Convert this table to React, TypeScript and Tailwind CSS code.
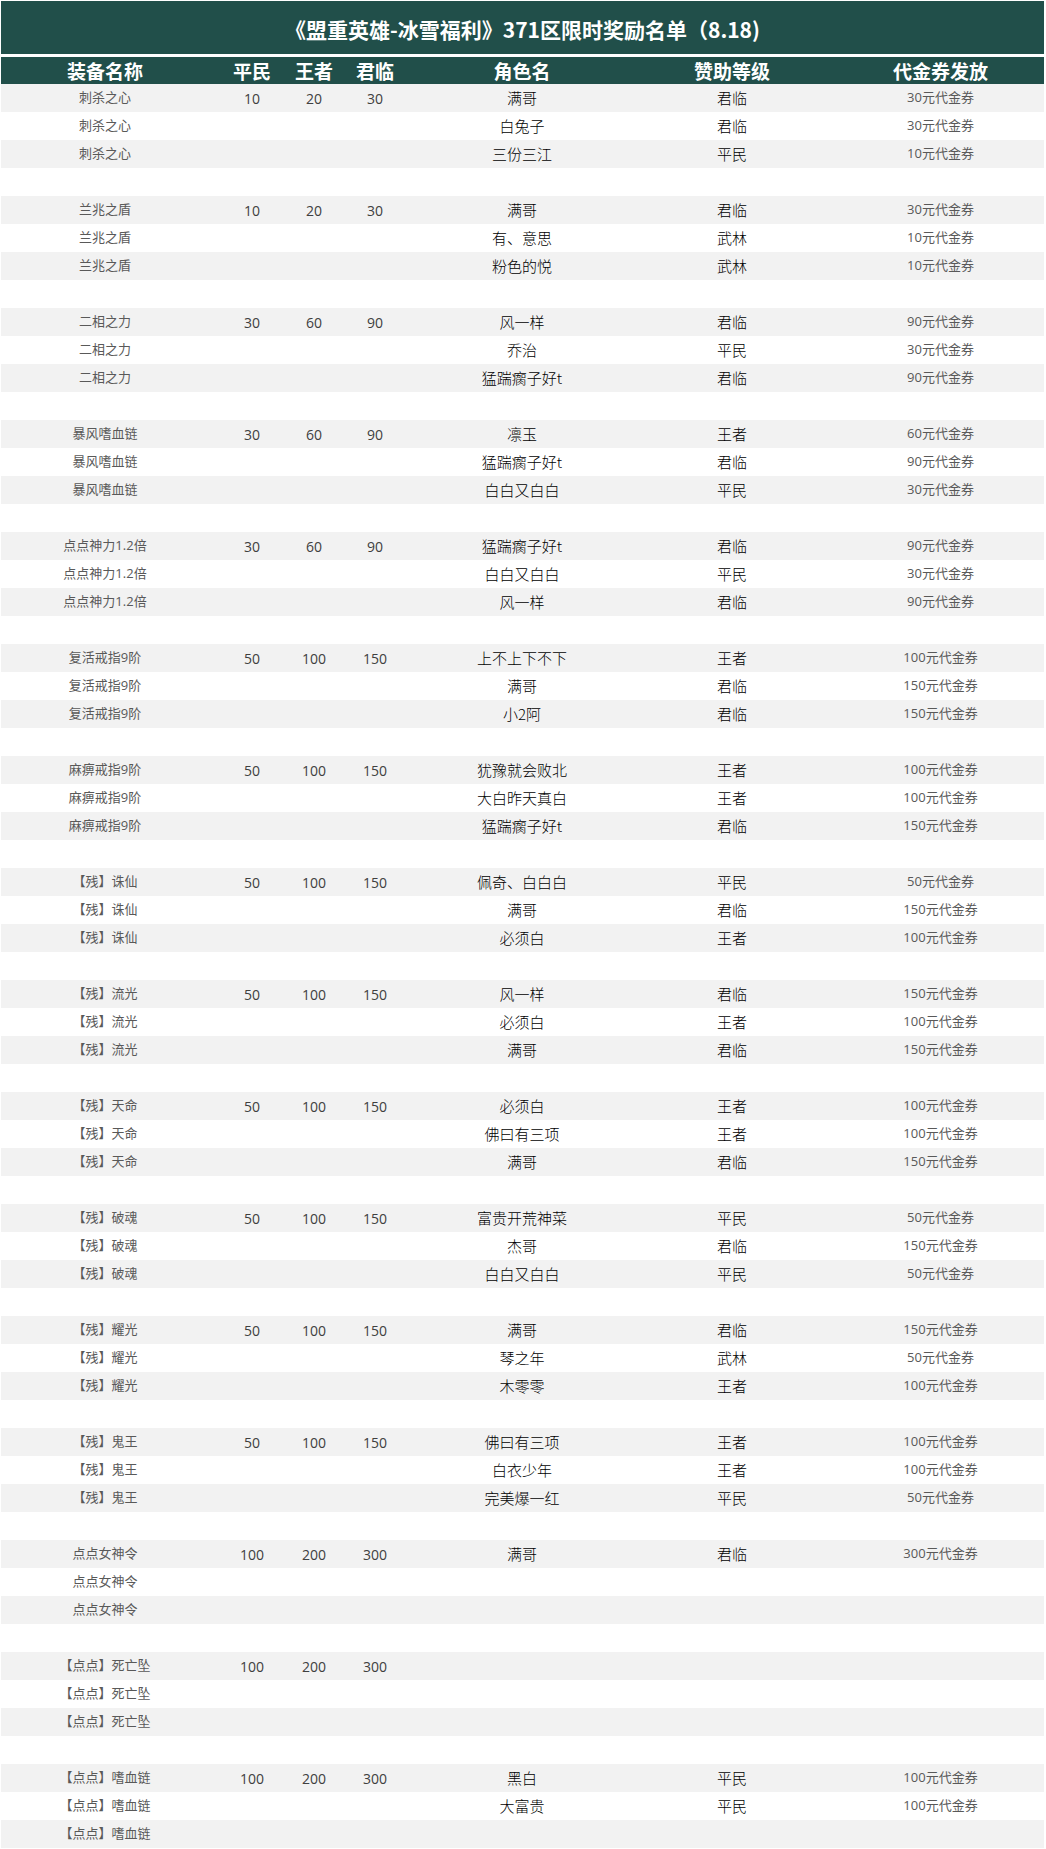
import React from 'react'

interface Row {
  item: string
  a?: string
  b?: string
  c?: string
  role?: string
  level?: string
  coupon?: string
}

type Group = {
  item: string
  price: [string, string, string]
  winners: ([string, string, string] | null)[]
}

const groups: Group[] = [
  { item: '刺杀之心', price: ['10', '20', '30'], winners: [['满哥', '君临', '30元代金券'], ['白兔子', '君临', '30元代金券'], ['三份三江', '平民', '10元代金券']] },
  { item: '兰兆之盾', price: ['10', '20', '30'], winners: [['满哥', '君临', '30元代金券'], ['有、意思', '武林', '10元代金券'], ['粉色的悦', '武林', '10元代金券']] },
  { item: '二相之力', price: ['30', '60', '90'], winners: [['风一样', '君临', '90元代金券'], ['乔治', '平民', '30元代金券'], ['猛踹瘸子好t', '君临', '90元代金券']] },
  { item: '暴风嗜血链', price: ['30', '60', '90'], winners: [['凛玉', '王者', '60元代金券'], ['猛踹瘸子好t', '君临', '90元代金券'], ['白白又白白', '平民', '30元代金券']] },
  { item: '点点神力1.2倍', price: ['30', '60', '90'], winners: [['猛踹瘸子好t', '君临', '90元代金券'], ['白白又白白', '平民', '30元代金券'], ['风一样', '君临', '90元代金券']] },
  { item: '复活戒指9阶', price: ['50', '100', '150'], winners: [['上不上下不下', '王者', '100元代金券'], ['满哥', '君临', '150元代金券'], ['小2阿', '君临', '150元代金券']] },
  { item: '麻痹戒指9阶', price: ['50', '100', '150'], winners: [['犹豫就会败北', '王者', '100元代金券'], ['大白昨天真白', '王者', '100元代金券'], ['猛踹瘸子好t', '君临', '150元代金券']] },
  { item: '【残】诛仙', price: ['50', '100', '150'], winners: [['佩奇、白白白', '平民', '50元代金券'], ['满哥', '君临', '150元代金券'], ['必须白', '王者', '100元代金券']] },
  { item: '【残】流光', price: ['50', '100', '150'], winners: [['风一样', '君临', '150元代金券'], ['必须白', '王者', '100元代金券'], ['满哥', '君临', '150元代金券']] },
  { item: '【残】天命', price: ['50', '100', '150'], winners: [['必须白', '王者', '100元代金券'], ['佛曰有三项', '王者', '100元代金券'], ['满哥', '君临', '150元代金券']] },
  { item: '【残】破魂', price: ['50', '100', '150'], winners: [['富贵开荒神菜', '平民', '50元代金券'], ['杰哥', '君临', '150元代金券'], ['白白又白白', '平民', '50元代金券']] },
  { item: '【残】耀光', price: ['50', '100', '150'], winners: [['满哥', '君临', '150元代金券'], ['琴之年', '武林', '50元代金券'], ['木零零', '王者', '100元代金券']] },
  { item: '【残】鬼王', price: ['50', '100', '150'], winners: [['佛曰有三项', '王者', '100元代金券'], ['白衣少年', '王者', '100元代金券'], ['完美爆一红', '平民', '50元代金券']] },
  { item: '点点女神令', price: ['100', '200', '300'], winners: [['满哥', '君临', '300元代金券'], null, null] },
  { item: '【点点】死亡坠', price: ['100', '200', '300'], winners: [null, null, null] },
  { item: '【点点】嗜血链', price: ['100', '200', '300'], winners: [['黑白', '平民', '100元代金券'], ['大富贵', '平民', '100元代金券'], null] },
]

// flatten groups into table rows, one empty row between groups
const rows: (Row | null)[] = []
groups.forEach((g, gi) => {
  g.winners.forEach((w, i) => {
    rows.push({
      item: g.item,
      a: i === 0 ? g.price[0] : '',
      b: i === 0 ? g.price[1] : '',
      c: i === 0 ? g.price[2] : '',
      role: w ? w[0] : '',
      level: w ? w[1] : '',
      coupon: w ? w[2] : '',
    })
  })
  if (gi < groups.length - 1) rows.push(null)
})

const cols = 'grid grid-cols-[208px_86px_38px_84px_210px_210px_207px]'
const cell = 'flex items-center justify-center whitespace-nowrap'

const App = () => {
  return (
    <div className="pl-px pt-px w-[1046px] bg-white font-['Open_Sans','Noto_Sans_CJK_SC',sans-serif]">
      <div className="w-[1043px]">
        <div className="h-[53px] bg-[#214f4a] flex items-center justify-center pt-[5px]">
          <h1 className="text-white text-[21px] font-bold font-['Noto_Sans_CJK_SC',sans-serif]">《盟重英雄-冰雪福利》371区限时奖励名单（8.18)</h1>
        </div>

        <div className={cols + ' h-[27px] mt-[3px] bg-[#214f4a] text-white text-[19px] font-bold font-["Noto_Sans_CJK_SC",sans-serif]'}>
          <div className={cell}>装备名称</div>
          <div className={cell}>平民</div>
          <div className={cell}>王者</div>
          <div className={cell}>君临</div>
          <div className={cell}>角色名</div>
          <div className={cell}>赞助等级</div>
          <div className={cell}>代金券发放</div>
        </div>

        {rows.map((r, i) => (
          <div key={i} className={cols + ' h-[28px] ' + (i % 2 === 0 ? 'bg-[#f2f2f2]' : 'bg-white')}>
            {r ? (
              <>
                <div className={cell + ' text-[13px] text-[#595959]'}>{r.item}</div>
                <div className={cell + ' text-[14px] text-[#404040]'}>{r.a}</div>
                <div className={cell + ' text-[14px] text-[#404040]'}>{r.b}</div>
                <div className={cell + ' text-[14px] text-[#404040]'}>{r.c}</div>
                <div className={cell + " text-[15px] text-black font-light font-['Noto_Sans_CJK_SC',sans-serif]"}>{r.role}</div>
                <div className={cell + " text-[15px] text-black font-light font-['Noto_Sans_CJK_SC',sans-serif]"}>{r.level}</div>
                <div className={cell + ' text-[13px] text-[#595959]'}>{r.coupon}</div>
              </>
            ) : null}
          </div>
        ))}
      </div>
    </div>
  )
}

export default App
